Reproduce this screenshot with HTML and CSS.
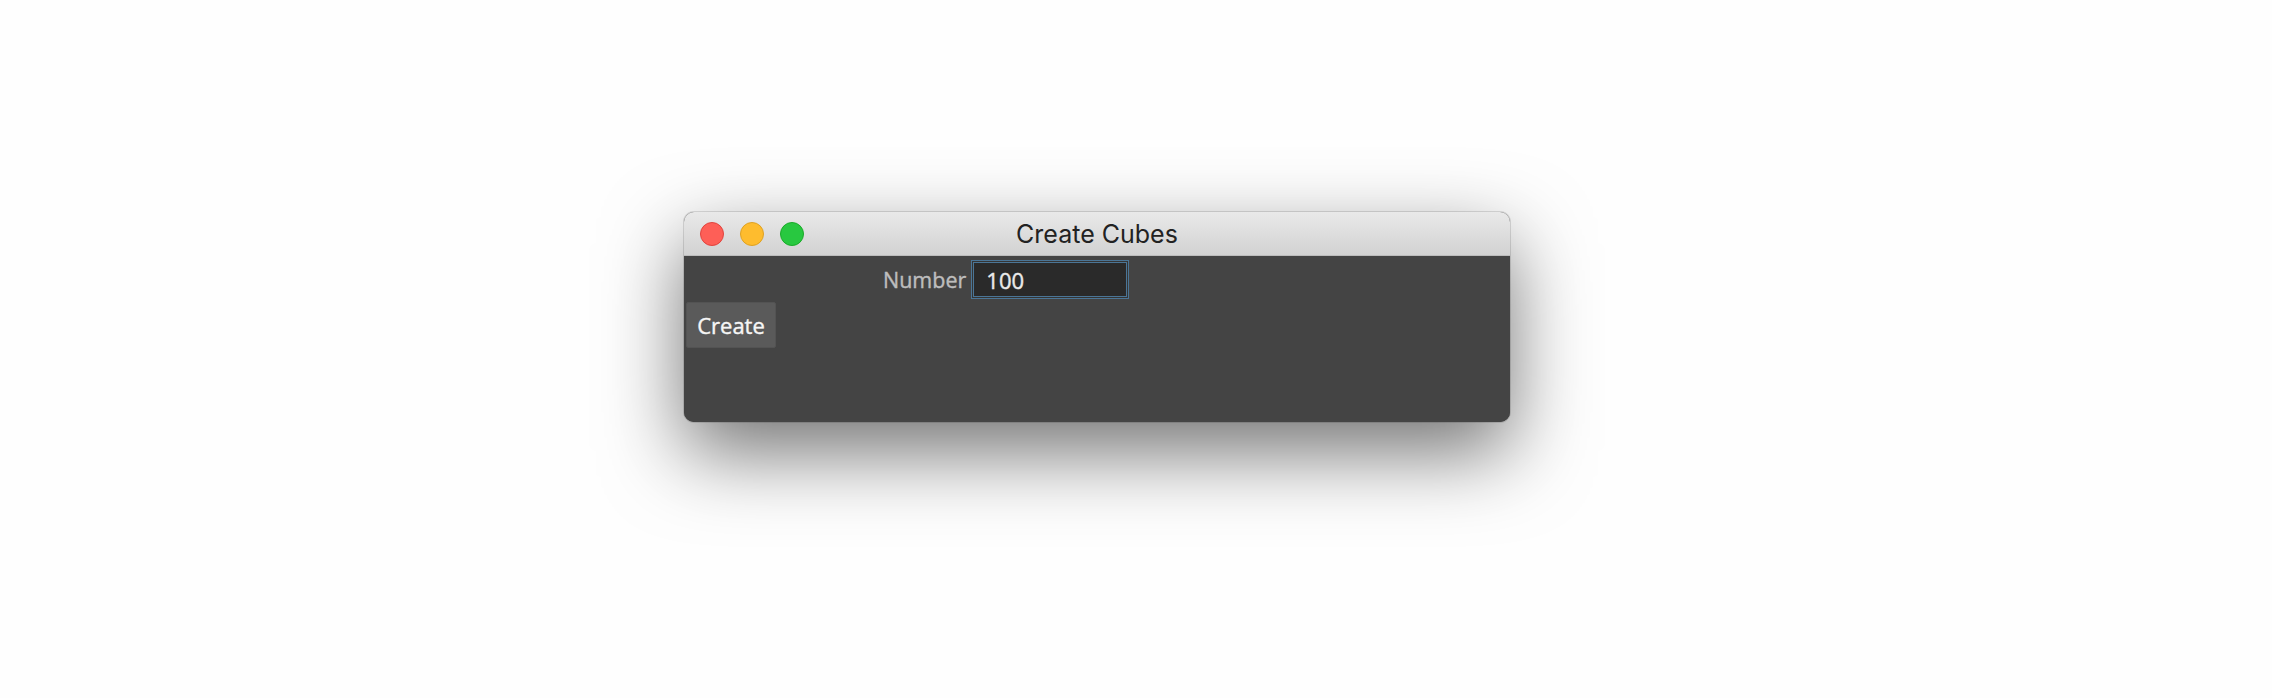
FILE: index.html
```html
<!DOCTYPE html>
<html>
<head>
<meta charset="utf-8">
<link rel="stylesheet" href="styles.css">
</head>
<body>
<div class="stage">
  <div class="window">
    <div class="titlebar">
      <div class="lights">
        <span class="light red"></span>
        <span class="light yellow"></span>
        <span class="light green"></span>
      </div>
      <div class="title">Create Cubes</div>
    </div>
    <div class="content">
      <div class="row">
        <label class="label">Number</label>
        <div class="field"><span class="value">100</span></div>
      </div>
      <button class="btn">Create</button>
    </div>
  </div>
</div>
</body>
</html>
```

FILE: styles.css
```css
html, body {
  margin: 0;
  padding: 0;
  background: #fefefe;
  width: 2272px;
  height: 698px;
  overflow: hidden;
}
.stage {
  padding: 212px 0 0 684px;
}
.window {
  width: 826px;
  height: 210px;
  border-radius: 10px;
  overflow: hidden;
  box-shadow: 0 30px 80px rgba(0,0,0,0.55), 0 0 0 1px rgba(0,0,0,0.12);
  background: #444444;
  display: flex;
  flex-direction: column;
}
.titlebar {
  height: 43px;
  flex: none;
  background: linear-gradient(#e9e9e9, #d2d2d2);
  border-bottom: 1px solid #bdbdbd;
  position: relative;
  display: flex;
  align-items: center;
}
.lights {
  display: flex;
  gap: 16px;
  padding-left: 16px;
}
.light {
  width: 22px;
  height: 22px;
  border-radius: 50%;
  display: block;
}
.red { background: #fe5f57; border: 1px solid #e0443e; }
.yellow { background: #febc2e; border: 1px solid #dea123; }
.green { background: #28c840; border: 1px solid #1aab29; }
.title {
  position: absolute;
  left: 0;
  right: 0;
  top: 0;
  bottom: 0;
  display: flex;
  align-items: center;
  justify-content: center;
  font-family: Inter, "Open Sans", sans-serif;
  font-size: 25px;
  color: #222222;
  pointer-events: none;
}
.content {
  flex: 1;
  background: #444444;
  padding-top: 4px;
  font-family: "Open Sans", sans-serif;
}
.row {
  display: flex;
  align-items: center;
  padding-left: 199px;
  height: 39px;
}
.label {
  font-size: 21.5px;
  color: #bdbdbd;
  -webkit-text-stroke: 0.4px #bdbdbd;
  margin-right: 7px;
}
.field {
  width: 154px;
  height: 35px;
  box-sizing: border-box;
  background: #2a2a2a;
  border: 1px solid #4b7596;
  box-shadow: 0 0 0 1px #353535, 0 0 0 2px #4b7596;
  display: flex;
  align-items: center;
  padding-left: 12px;
}
.value {
  font-size: 22px;
  color: #eaeaea;
  -webkit-text-stroke: 0.4px #eaeaea;
}
.btn {
  display: block;
  margin: 3px 0 0 2px;
  width: 90px;
  height: 46px;
  background: #5a5a5a;
  border: 1px solid #535353;
  border-radius: 2px;
  color: #f6f6f6;
  -webkit-text-stroke: 0.4px #f6f6f6;
  font-family: "Open Sans", sans-serif;
  font-size: 22px;
  padding: 0;
}
```
